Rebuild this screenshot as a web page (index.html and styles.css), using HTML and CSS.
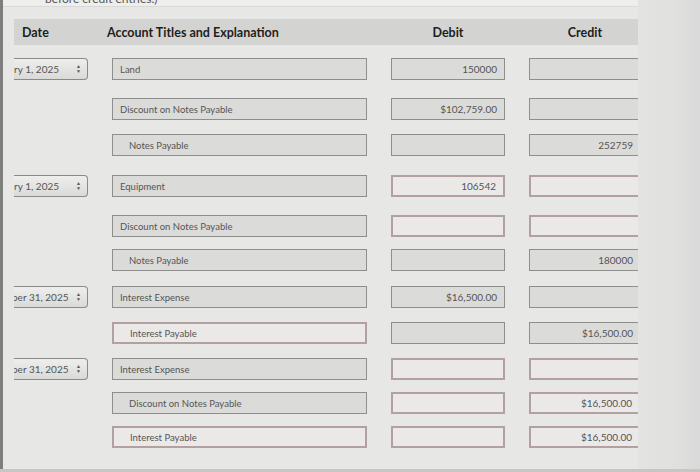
FILE: index.html
```html
<!DOCTYPE html>
<html>
<head>
<meta charset="utf-8">
<link rel="stylesheet" href="styles.css">
</head>
<body>
<div class="screen">
  <div class="edge"></div>
  <div class="main">
    <div class="caption"><span class="caption-text">before credit entries.)</span></div>
    <div class="head">
      <div class="h-date">Date</div>
      <div class="h-acct">Account Titles and Explanation</div>
      <div class="h-num">Debit</div>
      <div class="h-num">Credit</div>
    </div>
    <div class="rows">
      <div class="date"><span class="date-text">January 1, 2025</span><span class="arrows">&#9650;<br>&#9660;</span></div>
      <div class="box">Land</div>
      <div class="box num">150000</div>
      <div class="box num"></div>

      <div class="blank"></div>
      <div class="box">Discount on Notes Payable</div>
      <div class="box num">$102,759.00</div>
      <div class="box num"></div>

      <div class="blank"></div>
      <div class="box indent">Notes Payable</div>
      <div class="box num"></div>
      <div class="box num">252759</div>

      <div class="date"><span class="date-text">January 1, 2025</span><span class="arrows">&#9650;<br>&#9660;</span></div>
      <div class="box">Equipment</div>
      <div class="box num err">106542</div>
      <div class="box num err"></div>

      <div class="blank"></div>
      <div class="box">Discount on Notes Payable</div>
      <div class="box num err"></div>
      <div class="box num err"></div>

      <div class="blank"></div>
      <div class="box indent">Notes Payable</div>
      <div class="box num"></div>
      <div class="box num">180000</div>

      <div class="date"><span class="date-text long">December 31, 2025</span><span class="arrows">&#9650;<br>&#9660;</span></div>
      <div class="box">Interest Expense</div>
      <div class="box num">$16,500.00</div>
      <div class="box num"></div>

      <div class="blank"></div>
      <div class="box indent err">Interest Payable</div>
      <div class="box num"></div>
      <div class="box num">$16,500.00</div>

      <div class="date"><span class="date-text long">December 31, 2025</span><span class="arrows">&#9650;<br>&#9660;</span></div>
      <div class="box">Interest Expense</div>
      <div class="box num err"></div>
      <div class="box num err"></div>

      <div class="blank"></div>
      <div class="box indent">Discount on Notes Payable</div>
      <div class="box num err"></div>
      <div class="box num err">$16,500.00</div>

      <div class="blank"></div>
      <div class="box indent err">Interest Payable</div>
      <div class="box num err"></div>
      <div class="box num err">$16,500.00</div>
    </div>
  </div>
  <div class="side"></div>
</div>
</body>
</html>
```

FILE: styles.css
```css
html, body {
  margin: 0;
  padding: 0;
}
body {
  width: 700px;
  height: 472px;
  overflow: hidden;
  font-family: Lato, "Open Sans", sans-serif;
  background: #e4e4e2;
}
.screen {
  display: flex;
  height: 472px;
  box-sizing: border-box;
  border-bottom: 3px solid #c6c6c4;
}
.edge {
  width: 3px;
  background: #7e7e7e;
  flex: none;
}
.main {
  width: 635px;
  flex: none;
  overflow: hidden;
  background: #e7e7e5;
}
.side {
  flex: 1;
  background: linear-gradient(90deg, #e3e3e2 0%, #e0e0df 60%, #d9d9d9 100%);
}
.caption {
  height: 6px;
  overflow: hidden;
  background: #eeeeec;
  border-bottom: 1px solid #d9d9d7;
}
.caption-text {
  display: block;
  margin-top: -9px;
  margin-left: 42px;
  font-size: 12px;
  color: #555;
}
.head {
  margin: 12px 0 0 11px;
  height: 26px;
  background: #d3d3d1;
  display: grid;
  grid-template-columns: 74px 255px 114px 112px;
  column-gap: 24px;
  align-items: center;
  font-weight: 700;
  font-size: 12.5px;
  color: #1e1e1e;
}
.h-date {
  padding-left: 8px;
}
.h-acct {
  margin-left: -5px;
}
.h-num {
  text-align: center;
}
.rows {
  margin: 13px 0 0 11px;
  display: grid;
  grid-template-columns: 74px 255px 114px 112px;
  column-gap: 24px;
  grid-template-rows: 40px 36px 41px 40px 34px 37px 36px 36px 34px 34px 22px;
  font-size: 9.5px;
  color: #555;
}
.box, .date {
  height: 22px;
  box-sizing: border-box;
  align-self: start;
  display: flex;
  align-items: center;
  white-space: nowrap;
}
.box {
  background: #dbdbd9;
  border: 1.5px solid #8e8e8c;
  padding: 0 7px;
}
.box.indent {
  padding-left: 16px;
}
.box.num {
  justify-content: flex-end;
  font-size: 10px;
}
.box.err {
  background: #ebe9e8;
  border: 2px solid #b3a0a0;
}
.date {
  background: linear-gradient(180deg, #eeeeec 0%, #dadad8 100%);
  border: 1px solid #8a8a88;
  border-left: none;
  border-radius: 0 4px 4px 0;
  overflow: hidden;
  padding-right: 6px;
  color: #555;
  font-size: 10px;
}
.date-text {
  flex: none;
  margin-left: -25px;
}
.date-text.long {
  margin-left: -33px;
}
.arrows {
  flex: none;
  margin-left: auto;
  font-size: 5px;
  line-height: 5px;
  color: #555;
  text-align: center;
}
```
